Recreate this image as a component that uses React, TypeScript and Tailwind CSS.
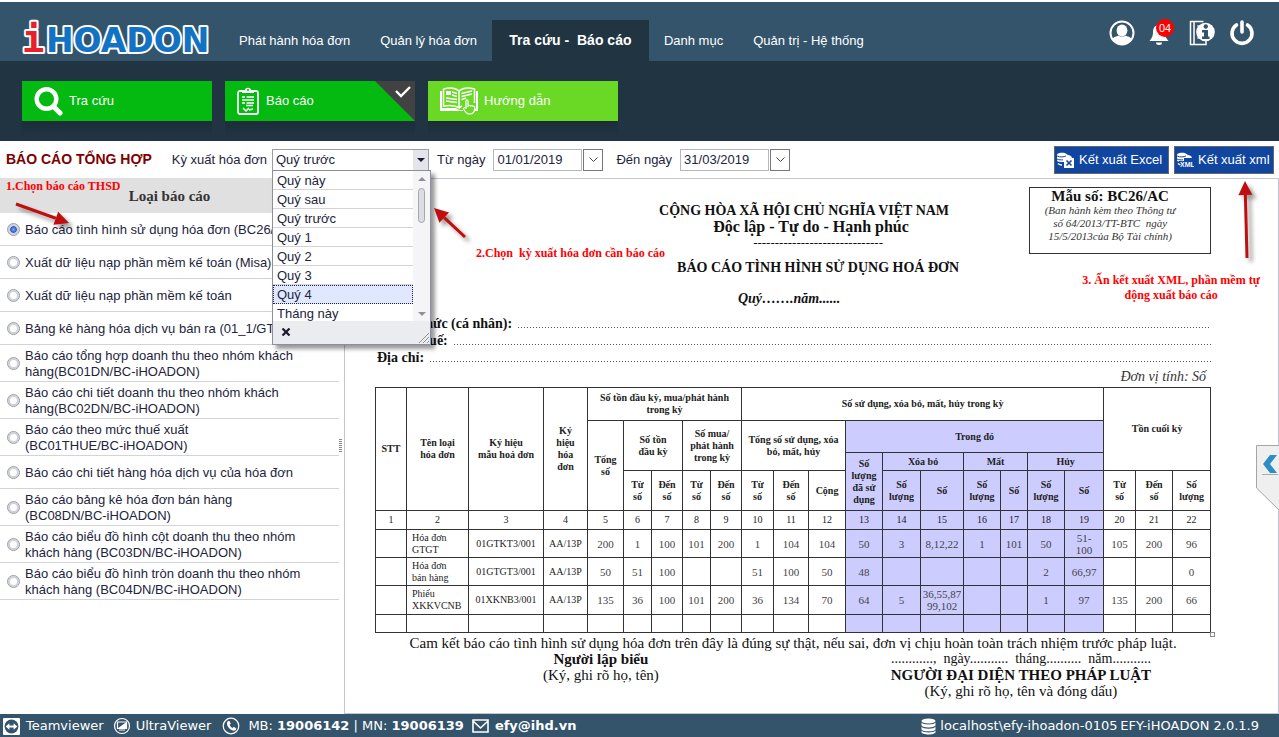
import { useState } from "react";
import type { ReactNode } from "react";

const SANS = "font-['Liberation_Sans',Arial,sans-serif]";
const SERIF = "font-['Liberation_Serif','Times_New_Roman',serif]";

function Logo() {
  return (
    <svg viewBox="0 0 204 44" className="h-[44px] w-[204px] overflow-visible" role="img" aria-label="iHOADON">
      <g paintOrder="stroke" strokeLinejoin="round" fontWeight="bold">
        <text x="26" y="35" fontFamily="DejaVu Sans, sans-serif" fontSize="33" fill="#1273c4" stroke="#fff" strokeWidth="4">
          HOADON
        </text>
        <text x="2" y="35" fontFamily="DejaVu Sans Mono, monospace" fontSize="37" fill="#e8202a" stroke="#fff" strokeWidth="4">
          i
        </text>
      </g>
    </svg>
  );
}

function UserIcon() {
  return (
    <svg viewBox="0 0 26 26" className="size-[26px]">
      <circle cx="13" cy="13" r="11.5" fill="none" stroke="#fff" strokeWidth="2" />
      <ellipse cx="13" cy="10.500" rx="5.400" ry="6" fill="#fff" />
      <path d="M3.500 19c1-2.500 4-2.400 6-3.600 2 1.600 5 1.600 7 0 2 1.200 5 1.100 6 3.600-2.500 4-5.500 5.500-9.500 5.500S6 23 3.500 19z" fill="#fff" />
    </svg>
  );
}

function BellIcon() {
  return (
    <svg viewBox="0 0 20 22" className="h-[22px] w-[20px]">
      <path d="M10 1c-4 0-6 3-6 7 0 5-2 7-3.500 9h19C18 15 16 13 16 8c0-4-2-7-6-7z" fill="#fff" />
      <path d="M7 18.500h6a3 2.500 0 0 1-6 0z" fill="#fff" />
    </svg>
  );
}

function GuideIcon() {
  return (
    <svg viewBox="0 0 26 26" className="size-[26px]">
      <path d="M1.500 1.500h13M1.500 1v23.500h15.500v-4M5 1.500v23" fill="none" stroke="#fff" strokeWidth="1.500" />
      <path d="M8 6h3M8 10h2M8 18h3" stroke="#fff" strokeWidth="1.200" />
      <circle cx="16.500" cy="12" r="9.300" fill="#fff" />
      <circle cx="16.800" cy="6.500" r="2.200" fill="#34546b" />
      <path d="M13 10h6v6.500h1.500v2.500h-7.500v-2.500H15v-4h-2z" fill="#34546b" />
    </svg>
  );
}

function PowerIcon() {
  return (
    <svg viewBox="0 0 26 26" className="size-[26px]">
      <path d="M7.500 5a10 10 0 1 0 11 0M13 2v10" fill="none" stroke="#fff" strokeWidth="3.600" strokeLinecap="round" />
    </svg>
  );
}

function SearchIcon() {
  return (
    <svg viewBox="0 0 30 30" className="size-[30px]">
      <circle cx="13.500" cy="13" r="9.800" fill="none" stroke="#fff" strokeWidth="4.400" />
      <path d="M21 21l6 6" stroke="#fff" strokeWidth="5" strokeLinecap="round" />
    </svg>
  );
}

function ClipboardIcon() {
  return (
    <svg viewBox="0 0 22 28" className="h-[28px] w-[22px]">
      <rect x="1" y="4" width="20" height="23" rx="2" fill="none" stroke="#fff" strokeWidth="1.800" />
      <path d="M5 3h3c0-3 6-3 6 0h3v3H5z" fill="#fff" />
      <circle cx="11" cy="3" r="1" fill="#04b910" />
      <path d="M5 10h3M9.500 10H17M5 13h12M5 16h3M9.500 16H17M9 18.500h7" stroke="#fff" strokeWidth="1.500" />
      <path d="M6 21l3 3 3-3M12 23l4-1" fill="none" stroke="#fff" strokeWidth="1.500" />
    </svg>
  );
}

function BookIcon() {
  return (
    <svg viewBox="0 0 38 28" className="h-[28px] w-[38px]">
      <path d="M0 4h2v17h14l3 2h4v1H0zM36 4h2v20h-4v-2h2z" fill="#fff" />
      <path d="M3.500 2C9 .5 15 .5 19 4c4-3.500 10-3.500 15.500-2v14M19 4v17C15 18 9 18 3.500 19V2M19 21c1-1 2-1.500 3-2" fill="none" stroke="#fff" strokeWidth="1.500" />
      <rect x="6" y="4" width="5" height="4" fill="#fff" />
      <path d="M12 5l5 1.500M12 8l5 1.500M6 11l11 1.500M6 14l11 1.500M21.500 6.500L32 4M21.500 9.500L32 7M21.500 12.500L26 11" stroke="#fff" strokeWidth="1.400" />
      <path d="M26 21v-7c0-1.500 2-1.500 2 0v5c1-1 2-1 2.500 0 1-.8 2-.5 2.300.3 1-.5 2 0 2 1.200 0 4-1.300 6.500-5.300 6.500-3 0-4-2-6-5 0-1.500 1.500-1.500 2.500-1z" fill="#69d926" stroke="#fff" strokeWidth="1.200" />
    </svg>
  );
}

function DataIcon({ label }: { label: string }) {
  return (
    <svg viewBox="0 0 17 16" className="h-[16px] w-[17px]">
      <path d="M0 2.500C1 0 9 0 10 2.500L14 4l1 2H7v4H4C1 10 0 9 0 8z" fill="#fff" />
      <path d="M0 4c3 1.500 7 1 9 0M0 7c2 1 4 1 6 .8" fill="none" stroke="#1146a0" />
      <path d="M1 11.500c1 1 2 1.500 4 1.500" fill="none" stroke="#fff" strokeWidth="1.500" />
      {label === "X" ? (
        <>
          <rect x="7" y="6" width="10" height="10" fill="#fff" />
          <path d="M9.500 8.500l5 5M14.500 8.500l-5 5" stroke="#1146a0" strokeWidth="1.600" />
        </>
      ) : (
        <text x="3" y="15" fontFamily="Liberation Sans" fontSize="7" fontWeight="bold" fill="#fff" stroke="#1146a0" strokeWidth="2" paintOrder="stroke">
          {label}
        </text>
      )}
    </svg>
  );
}

function Arrow({ className, w, h, x1, y1, x2, y2 }: { className: string; w: number; h: number; x1: number; y1: number; x2: number; y2: number }) {
  const len = Math.hypot(x2 - x1, y2 - y1);
  const ux = (x2 - x1) / len;
  const uy = (y2 - y1) / len;
  const bx = x2 - ux * 14;
  const by = y2 - uy * 14;
  return (
    <svg width={w} height={h} className={`pointer-events-none absolute z-30 overflow-visible drop-shadow-[4px_4px_2px_rgba(0,0,0,0.4)] ${className}`} aria-hidden="true">
      <path d={`M${x1} ${y1}L${bx} ${by}`} stroke="#c00d0d" strokeWidth="3" />
      <path d={`M${x2} ${y2}L${bx - uy * 7} ${by + ux * 7}L${bx + uy * 7} ${by - ux * 7}z`} fill="#c00d0d" />
    </svg>
  );
}

const NAV = ["Phát hành hóa đơn", "Quản lý hóa đơn", "Tra cứu -  Báo cáo", "Danh mục", "Quản trị - Hệ thống"];

function Header() {
  return (
    <header className="mt-[2px] flex h-[59px] items-end bg-[#34546b] text-[13px] text-white">
      <a href="#home" className="ml-5 block">
        <Logo />
      </a>
      <nav className="flex">
        {NAV.map((item, i) => (
          <a
            key={item}
            href="#nav"
            className={
              i === 2
                ? "flex h-[41px] w-[157px] items-center justify-center whitespace-pre bg-[#213441] text-[14px] font-bold"
                : "flex h-[41px] items-center whitespace-pre px-[15px]"
            }
          >
            {item}
          </a>
        ))}
      </nav>
      <div className="mb-[15px] ml-auto mr-6 flex items-center gap-[14px]">
        <button aria-label="Tài khoản"><UserIcon /></button>
        <button aria-label="Thông báo" className="relative flex w-[26px] pt-1">
          <BellIcon />
          <span className="absolute left-[7px] top-[-1px] flex size-[18px] items-center justify-center rounded-full bg-[#f00] text-[11px]">04</span>
        </button>
        <button aria-label="Thông tin"><GuideIcon /></button>
        <button aria-label="Thoát"><PowerIcon /></button>
      </div>
    </header>
  );
}

function Tile({ icon, label, tone, checked }: { icon: ReactNode; label: string; tone: string; checked?: boolean }) {
  return (
    <div className="w-[190px] shrink-0">
      <button className={`relative flex h-[40px] w-full items-center text-left text-white ${tone}`}>
        {icon}
        {label}
        {checked && (
          <svg viewBox="0 0 40 40" className="absolute right-0 top-0 size-[40px]" aria-hidden="true">
            <path d="M0 0h40v40z" fill="#424242" />
            <path d="M21 10l5 5 9-9" fill="none" stroke="#fff" strokeWidth="2.400" />
          </svg>
        )}
      </button>
      <div className="h-4 bg-linear-to-b from-[#1c2d39] to-[#213441]" />
    </div>
  );
}

const REPORTS = [
  ["Báo cáo tình hình sử dụng hóa đơn (BC26/AC)"],
  ["Xuất dữ liệu nạp phần mềm kế toán (Misa)"],
  ["Xuất dữ liệu nạp phần mềm kế toán"],
  ["Bảng kê hàng hóa dịch vụ bán ra (01_1/GTGT)"],
  ["Báo cáo tổng hợp doanh thu theo nhóm khách", "hàng(BC01DN/BC-iHOADON)"],
  ["Báo cáo chi tiết doanh thu theo nhóm khách", "hàng(BC02DN/BC-iHOADON)"],
  ["Báo cáo theo mức thuế xuất", "(BC01THUE/BC-iHOADON)"],
  ["Báo cáo chi tiết hàng hóa dịch vụ của hóa đơn"],
  ["Báo cáo bảng kê hóa đơn bán hàng", "(BC08DN/BC-iHOADON)"],
  ["Báo cáo biểu đồ hình cột doanh thu theo nhóm", "khách hàng (BC03DN/BC-iHOADON)"],
  ["Báo cáo biểu đồ hình tròn doanh thu theo nhóm", "khách hàng (BC04DN/BC-iHOADON)"],
];

function Sidebar() {
  const [picked, setPicked] = useState(0);
  return (
    <aside className="relative w-[339px] shrink-0">
      <h2 className={`flex h-[35px] items-center justify-center bg-[#e0e0e0] pt-[2px] text-[15px] font-bold text-[#333] ${SERIF}`}>Loại báo cáo</h2>
      {REPORTS.map((lines, i) => (
        <label
          key={lines[0]}
          className={`flex items-center gap-[5px] whitespace-nowrap border-b border-[#d3d3da] pl-[7px] leading-[16px] ${lines.length > 1 ? "h-[37px]" : "h-[33px]"}`}
        >
          <input
            type="radio"
            name="report"
            checked={picked === i}
            onChange={() => setPicked(i)}
            className="size-[13px] shrink-0 appearance-none rounded-full border border-[#9a9da8] bg-white shadow-[inset_0_0_0_2px_#d0d2d8] checked:bg-[radial-gradient(circle,#7fb0f5_0,#2f55c8_3px,#dfe4f5_4px)]"
          />
          <span className="pt-px">
            {lines.map((l) => (
              <span key={l} className="block">{l}</span>
            ))}
          </span>
        </label>
      ))}
      <p className={`absolute left-[6px] top-0 z-10 text-[12px] font-bold leading-[16px] text-[#f00] ${SERIF}`}>1.Chọn báo cáo THSD</p>
      <Arrow className="left-[15px] top-[25px]" w={56} h={24} x1={1} y1={1} x2={54} y2={20} />
    </aside>
  );
}

const PERIODS = ["Quý này", "Quý sau", "Quý trước", "Quý 1", "Quý 2", "Quý 3", "Quý 4", "Tháng này"];

function PeriodMenu() {
  return (
    <div className="absolute left-0 top-[21px] z-20 w-[159px] border border-[#8d8fa0] bg-white shadow-[4px_4px_4px_rgba(0,0,0,0.4)]">
      <div className="flex h-[150px] overflow-hidden">
        <ul role="listbox" aria-label="Kỳ xuất hóa đơn" className="grow">
          {PERIODS.map((p) => (
            <li
              key={p}
              role="option"
              aria-selected={p === "Quý 4"}
              className={
                p === "Quý 4"
                  ? "h-[19px] border border-dotted border-[#22243c] bg-[#e0e8ff] pl-[3px] leading-[18px]"
                  : "h-[19px] border-b border-[#d3d3da] pl-1 leading-[19px]"
              }
            >
              {p}
            </li>
          ))}
        </ul>
        <div className="flex w-[17px] flex-col items-center bg-[#f5f5f7] pb-[5px] pt-[6px]">
          <span className="border-x-4 border-b-4 border-x-transparent border-b-[#8f8f99]" />
          <span className="mt-[7px] h-[35px] w-[7px] rounded-full border border-[#a4a6b0] bg-[#dcdde2]" />
          <span className="mt-auto border-x-4 border-t-4 border-x-transparent border-t-[#8f8f99]" />
        </div>
      </div>
      <div className="flex h-[23px] items-center justify-between bg-[#ebecf0] pl-2">
        <button aria-label="Đóng">
          <svg viewBox="0 0 10 8" className="h-[8px] w-[10px]">
            <path d="M1.500 .5l7 7M8.500 .5l-7 7" stroke="#1c1c30" strokeWidth="2.200" />
          </svg>
        </button>
        <svg viewBox="0 0 12 12" className="size-[12px] self-end">
          <path d="M1 11L11 1M5 11l6-6M9 11l2-2" stroke="#8f8f99" />
        </svg>
      </div>
    </div>
  );
}

function DateField({ id, label, value }: { id: string; label: string; value: string }) {
  return (
    <div className="flex items-center">
      <label htmlFor={id} className="mr-2">{label}</label>
      <input id={id} defaultValue={value} className="h-[22px] w-[89px] border border-[#b4b6c2] pl-[3px] pr-1" />
      <button aria-label={`Chọn ${label}`} className="ml-px flex h-[22px] w-[20px] items-center justify-center border border-[#777]">
        <svg viewBox="0 0 9 5" className="h-[5px] w-[9px]">
          <path d="M.5 .5l4 4 4-4" fill="none" stroke="#444" />
        </svg>
      </button>
    </div>
  );
}

function Toolbar() {
  return (
    <div className="flex h-[37px] items-center pl-[6px] pr-[5px]">
      <h1 className="mr-5 whitespace-nowrap text-[14px] font-bold text-[#800000]">BÁO CÁO TỔNG HỢP</h1>
      <label htmlFor="period" className="mr-[5px] whitespace-nowrap">Kỳ xuất hóa đơn</label>
      <div className="relative mr-[8px] h-[22px] w-[157px]">
        <select id="period" defaultValue="Quý trước" className="block h-[22px] w-full appearance-none border border-[#9a9cab] bg-white pl-[3px]">
          <option>Quý trước</option>
        </select>
        <span className="pointer-events-none absolute right-px top-px flex h-5 w-[15px] items-center justify-center bg-[#e4e5ea]">
          <span className="border-x-4 border-t-4 border-x-transparent border-t-[#1c1c30]" />
        </span>
        <PeriodMenu />
      </div>
      <div className="flex gap-[13px]">
        <DateField id="from" label="Từ ngày" value="01/01/2019" />
        <DateField id="to" label="Đến ngày" value="31/03/2019" />
      </div>
      <div className="ml-auto flex gap-[5px] text-white">
        <button className="flex h-[28px] w-[115px] items-center gap-[5px] whitespace-nowrap border border-[#666] bg-[#1146a0] pl-[2px]">
          <DataIcon label="X" />
          Kết xuất Excel
        </button>
        <button className="flex h-[28px] w-[100px] items-center gap-1 whitespace-nowrap border border-[#666] bg-[#1146a0] pl-[2px]">
          <DataIcon label="XML" />
          Kết xuất xml
        </button>
      </div>
    </div>
  );
}

const COLS = [
  "w-[31px]", "w-[62px]", "w-[75px]", "w-[44px]", "w-[36px]", "w-[28px]", "w-[31px]", "w-[28px]", "w-[31px]", "w-[32px]", "w-[35px]",
  "w-[37px]", "w-[37px]", "w-[38px]", "w-[43px]", "w-[37px]", "w-[27px]", "w-[37px]", "w-[39px]", "w-[32px]", "w-[37px]", "w-[38px]",
];

const ROWS: { h: string; cells: string[] }[] = [
  { h: "h-[28px]", cells: ["", "Hóa đơn\nGTGT", "01GTKT3/001", "AA/13P", "200", "1", "100", "101", "200", "1", "104", "104", "50", "3", "8,12,22", "1", "101", "50", "51-\n100", "105", "200", "96"] },
  { h: "h-[28px]", cells: ["", "Hóa đơn\nbán hàng", "01GTGT3/001", "AA/13P", "50", "51", "100", "", "", "51", "100", "50", "48", "", "", "", "", "2", "66,97", "", "", "0"] },
  { h: "h-[29px]", cells: ["", "Phiếu\nXKKVCNB", "01XKNB3/001", "AA/13P", "135", "36", "100", "101", "200", "36", "134", "70", "64", "5", "36,55,87\n99,102", "", "", "1", "97", "135", "200", "66"] },
  { h: "h-[18px]", cells: Array.from({ length: 22 }, () => "") },
];

function Th({ children, cs, rs, lilac }: { children: ReactNode; cs?: number; rs?: number; lilac?: boolean }) {
  return (
    <th colSpan={cs} rowSpan={rs} className={`whitespace-pre border border-[#333] p-0 font-bold ${lilac ? "bg-[#ccccff]" : ""}`}>
      {children}
    </th>
  );
}

function UsageTable() {
  return (
    <table className="w-full table-fixed border-collapse text-center text-[10px] leading-[12px] text-[#222]">
      <colgroup>
        {COLS.map((c, i) => (
          <col key={i} className={c} />
        ))}
      </colgroup>
      <thead>
        <tr className="h-[33px]">
          <Th rs={4}>STT</Th>
          <Th rs={4}>{"Tên loại\nhóa đơn"}</Th>
          <Th rs={4}>{"Ký hiệu\nmẫu hoá đơn"}</Th>
          <Th rs={4}>{"Ký\nhiệu\nhóa\nđơn"}</Th>
          <Th cs={5}>{"Số tồn đầu kỳ, mua/phát hành\ntrong kỳ"}</Th>
          <Th cs={10}>Số sử dụng, xóa bỏ, mất, hủy trong kỳ</Th>
          <Th cs={3} rs={3}>Tồn cuối kỳ</Th>
        </tr>
        <tr className="h-[32px]">
          <Th rs={3}>{"Tổng\nsố"}</Th>
          <Th cs={2} rs={2}>{"Số tồn\nđầu kỳ"}</Th>
          <Th cs={2} rs={2}>{"Số mua/\nphát hành\ntrong kỳ"}</Th>
          <Th cs={3} rs={2}>{"Tổng số sử dụng, xóa\nbỏ, mất, hủy"}</Th>
          <Th cs={7} lilac>Trong đó</Th>
        </tr>
        <tr className="h-[18px]">
          <Th rs={2} lilac>{"Số\nlượng\nđã sử\ndụng"}</Th>
          <Th cs={2} lilac>Xóa bỏ</Th>
          <Th cs={2} lilac>Mất</Th>
          <Th cs={2} lilac>Hủy</Th>
        </tr>
        <tr className="h-[40px]">
          <Th>{"Từ\nsố"}</Th>
          <Th>{"Đến\nsố"}</Th>
          <Th>{"Từ\nsố"}</Th>
          <Th>{"Đến\nsố"}</Th>
          <Th>{"Từ\nsố"}</Th>
          <Th>{"Đến\nsố"}</Th>
          <Th>Cộng</Th>
          <Th lilac>{"Số\nlượng"}</Th>
          <Th lilac>Số</Th>
          <Th lilac>{"Số\nlượng"}</Th>
          <Th lilac>Số</Th>
          <Th lilac>{"Số\nlượng"}</Th>
          <Th lilac>Số</Th>
          <Th>{"Từ\nsố"}</Th>
          <Th>{"Đến\nsố"}</Th>
          <Th>{"Số\nlượng"}</Th>
        </tr>
      </thead>
      <tbody>
        <tr className="h-[19px]">
          {COLS.map((_, i) => (
            <td key={i} className={`border border-[#333] p-0 ${i >= 12 && i <= 18 ? "bg-[#ccccff]" : ""}`}>{i + 1}</td>
          ))}
        </tr>
        {ROWS.map((r, ri) => (
          <tr key={ri} className={r.h}>
            {r.cells.map((c, i) => (
              <td
                key={i}
                className={`whitespace-pre border border-[#333] p-0 ${i === 1 ? "pl-[5px] text-left" : ""} ${i > 3 ? "text-[11px] text-[#444]" : ""} ${i >= 12 && i <= 18 ? "bg-[#ccccff]" : ""}`}
              >
                {c}
              </td>
            ))}
          </tr>
        ))}
      </tbody>
    </table>
  );
}

function Leader({ label }: { label: string }) {
  return (
    <div className="flex h-[17px] items-end whitespace-nowrap pl-[2px] font-bold leading-[17px]">
      {label}
      <span className="mb-1 ml-[6px] h-px grow bg-[repeating-linear-gradient(90deg,#555_0_1px,transparent_1px_3px)]" />
    </div>
  );
}

function Report() {
  return (
    <main className={`relative ml-[5px] grow border border-[#c4c5cf] pl-[30px] pr-[67px] text-[14px] leading-[16px] text-[#111] ${SERIF}`}>
      <div className="grid grid-cols-[1fr_182px] items-start">
        <div className="whitespace-nowrap pl-[218px] pt-6 text-center font-bold">
          <p className="pr-[14px]">CỘNG HÒA XÃ HỘI CHỦ NGHĨA VIỆT NAM</p>
          <p className="text-[16px]">Độc lập - Tự do - Hạnh phúc</p>
          <p className="pl-[14px] text-[13px] font-normal">------------------------------</p>
          <p className="mt-[9px] pl-[14px]">BÁO CÁO TÌNH HÌNH SỬ DỤNG HOÁ ĐƠN</p>
          <p className="mt-[15px] pr-[44px] italic">Quý…….năm......</p>
        </div>
        <div className="mt-2 h-[67px] border border-[#333] text-center">
          <p className="pr-5 text-[15px] font-bold">Mẫu số: BC26/AC</p>
          <p className="whitespace-pre pr-5 text-[11px] italic leading-[13px] text-[#333]">
            {"(Ban hành kèm theo Thông tư\nsố 64/2013/TT-BTC  ngày\n15/5/2013của Bộ Tài chính)"}
          </p>
        </div>
      </div>
      <div className="mt-2">
        <Leader label="Tên tổ chức (cá nhân):" />
        <Leader label="Mã số thuế:" />
        <Leader label="Địa chỉ:" />
      </div>
      <p className="pr-[5px] text-right italic leading-[21px] text-[#333]">Đơn vị tính: Số</p>
      <div className="relative">
        <UsageTable />
        <span className="absolute -bottom-1 -right-1 size-[5px] border border-[#888] bg-white" />
      </div>
      <p className="mt-[2px] flex justify-center whitespace-nowrap text-[15px]">
        Cam kết báo cáo tình hình sử dụng hóa đơn trên đây là đúng sự thật, nếu sai, đơn vị chịu hoàn toàn trách nhiệm trước pháp luật.
      </p>
      <div className="flex justify-between pl-[168px] pr-[60px] text-center text-[15px] leading-[16px]">
        <div>
          <p className="font-bold">Người lập biểu</p>
          <p>(Ký, ghi rõ họ, tên)</p>
        </div>
        <div>
          <p className="whitespace-pre text-[14px]">............,  ngày...........  tháng..........  năm...........</p>
          <p className="font-bold">NGƯỜI ĐẠI DIỆN THEO PHÁP LUẬT</p>
          <p>(Ký, ghi rõ họ, tên và đóng dấu)</p>
        </div>
      </div>

      <p className="absolute left-[131px] top-[66px] whitespace-pre text-[12px] font-bold text-[#f00]">2.Chọn  kỳ xuất hóa đơn cần báo cáo</p>
      <Arrow className="left-[88px] top-[28px]" w={36} h={32} x1={32} y1={30} x2={1} y2={1} />
      <p className="absolute right-[10px] top-[94px] w-[194px] text-center text-[12px] font-bold leading-[15px] text-[#f00]">
        3. Ấn kết xuất XML, phần mềm tự động xuất báo cáo
      </p>
      <Arrow className="right-[24px] top-[2px]" w={18} h={78} x1={11} y1={77} x2={9} y2={0} />
      <button aria-label="Mở bảng bên" className="absolute -right-px top-[266px] z-10">
        <svg viewBox="0 0 23 66" className="h-[66px] w-[23px]">
          <path d="M23 .5H.5V43L23 65" fill="#efefef" stroke="#a5a5a5" />
          <path d="M6 29.500h16" stroke="#aaa" />
          <path d="M14 10h7l-7 9 7 9h-7l-7-9z" fill="#2b8fc4" />
        </svg>
      </button>
    </main>
  );
}

function Footer() {
  return (
    <footer className="flex h-[23px] items-center whitespace-nowrap bg-[#34546b] pl-[3px] pr-5 pt-px font-['DejaVu_Sans',Verdana,sans-serif] text-[13px] text-white">
      <a href="#teamviewer" className="flex items-center gap-[6px]">
        <svg viewBox="0 0 16 16" className="size-[17px]">
          <rect width="16" height="16" rx="1" fill="#fff" />
          <circle cx="8" cy="8" r="6.500" fill="#34546b" />
          <path d="M2.500 8L6 5v2h4V5l3.500 3L10 11V9H6v2z" fill="#fff" />
        </svg>
        Teamviewer
      </a>
      <a href="#ultraviewer" className="ml-[9px] flex items-center gap-[5px]">
        <svg viewBox="0 0 18 18" className="size-[18px]">
          <circle cx="9" cy="9" r="7.500" fill="none" stroke="#fff" strokeWidth="1.200" />
          <path d="M4.500 5h9v6.500h-9zM6 13h6" fill="none" stroke="#fff" strokeWidth="1.200" />
          <path d="M4.500 11.500l9-6.500v6.500z" fill="#fff" />
        </svg>
        UltraViewer
      </a>
      <svg viewBox="0 0 18 18" className="ml-[11px] mr-[8px] size-[18px]">
        <circle cx="9" cy="9" r="7.800" fill="none" stroke="#fff" strokeWidth="1.200" />
        <path d="M5.500 4.500l1.800-.8 1.500 3-1.200 1c.5 1.500 1.500 2.600 3 3.200l1.200-1.100 2.500 1.700c-.5 2-2 2.500-3.500 2-3-1-5.500-4-5.800-6.500 0-1 0-2 .5-2.500z" fill="#fff" />
      </svg>
      <span>MB: <b>19006142</b> | MN: <b>19006139</b></span>
      <a href="mailto:efy@ihd.vn" className="ml-2 flex items-center gap-[6px] font-bold">
        <svg viewBox="0 0 17 14" className="h-[14px] w-[17px]">
          <path d="M1 1h15v12H1zM1 2l7.500 7L16 2" fill="none" stroke="#fff" strokeWidth="1.600" />
        </svg>
        efy@ihd.vn
      </a>
      <svg viewBox="0 0 15 17" className="ml-auto mr-[4px] h-[17px] w-[15px]">
        <ellipse cx="7.500" cy="3" rx="7" ry="2.600" fill="#fff" />
        <path d="M.5 4.500c1 2.500 13 2.500 14 0v3c-1 2.500-13 2.500-14 0zM.5 8.800c1 2.500 13 2.500 14 0v2.600c-1 2.500-13 2.500-14 0zM.5 12.600c1 2.500 13 2.500 14 0v1.600c-1 3-13 3-14 0z" fill="#fff" />
      </svg>
      <span className="w-[180px] overflow-hidden">localhost\efy-ihoadon-0105</span>
      <span>EFY-iHOADON 2.0.1.9</span>
    </footer>
  );
}

export default function App() {
  return (
    <div className={`flex min-h-screen flex-col bg-white text-[13px] text-[#22243c] ${SANS}`}>
      <Header />
      <div className="flex h-[80px] gap-[13px] bg-[#213441] pl-[22px] pt-5">
        <Tile icon={<span className="ml-[11px] mr-[6px]"><SearchIcon /></span>} label="Tra cứu" tone="bg-[#04b910]" />
        <Tile icon={<span className="ml-[12px] mr-[7px]"><ClipboardIcon /></span>} label="Báo cáo" tone="bg-[#04b910]" checked />
        <Tile icon={<span className="ml-[12px] mr-[6px]"><BookIcon /></span>} label="Hướng dẫn" tone="bg-[#69d926]" />
      </div>
      <Toolbar />
      <div className="flex grow">
        <Sidebar />
        <div className="relative flex grow">
          <span className="absolute left-0 top-[261px] h-[14px] w-[3px] bg-[repeating-linear-gradient(180deg,#888_0_1px,transparent_1px_2px)]" />
          <Report />
        </div>
      </div>
      <Footer />
    </div>
  );
}
